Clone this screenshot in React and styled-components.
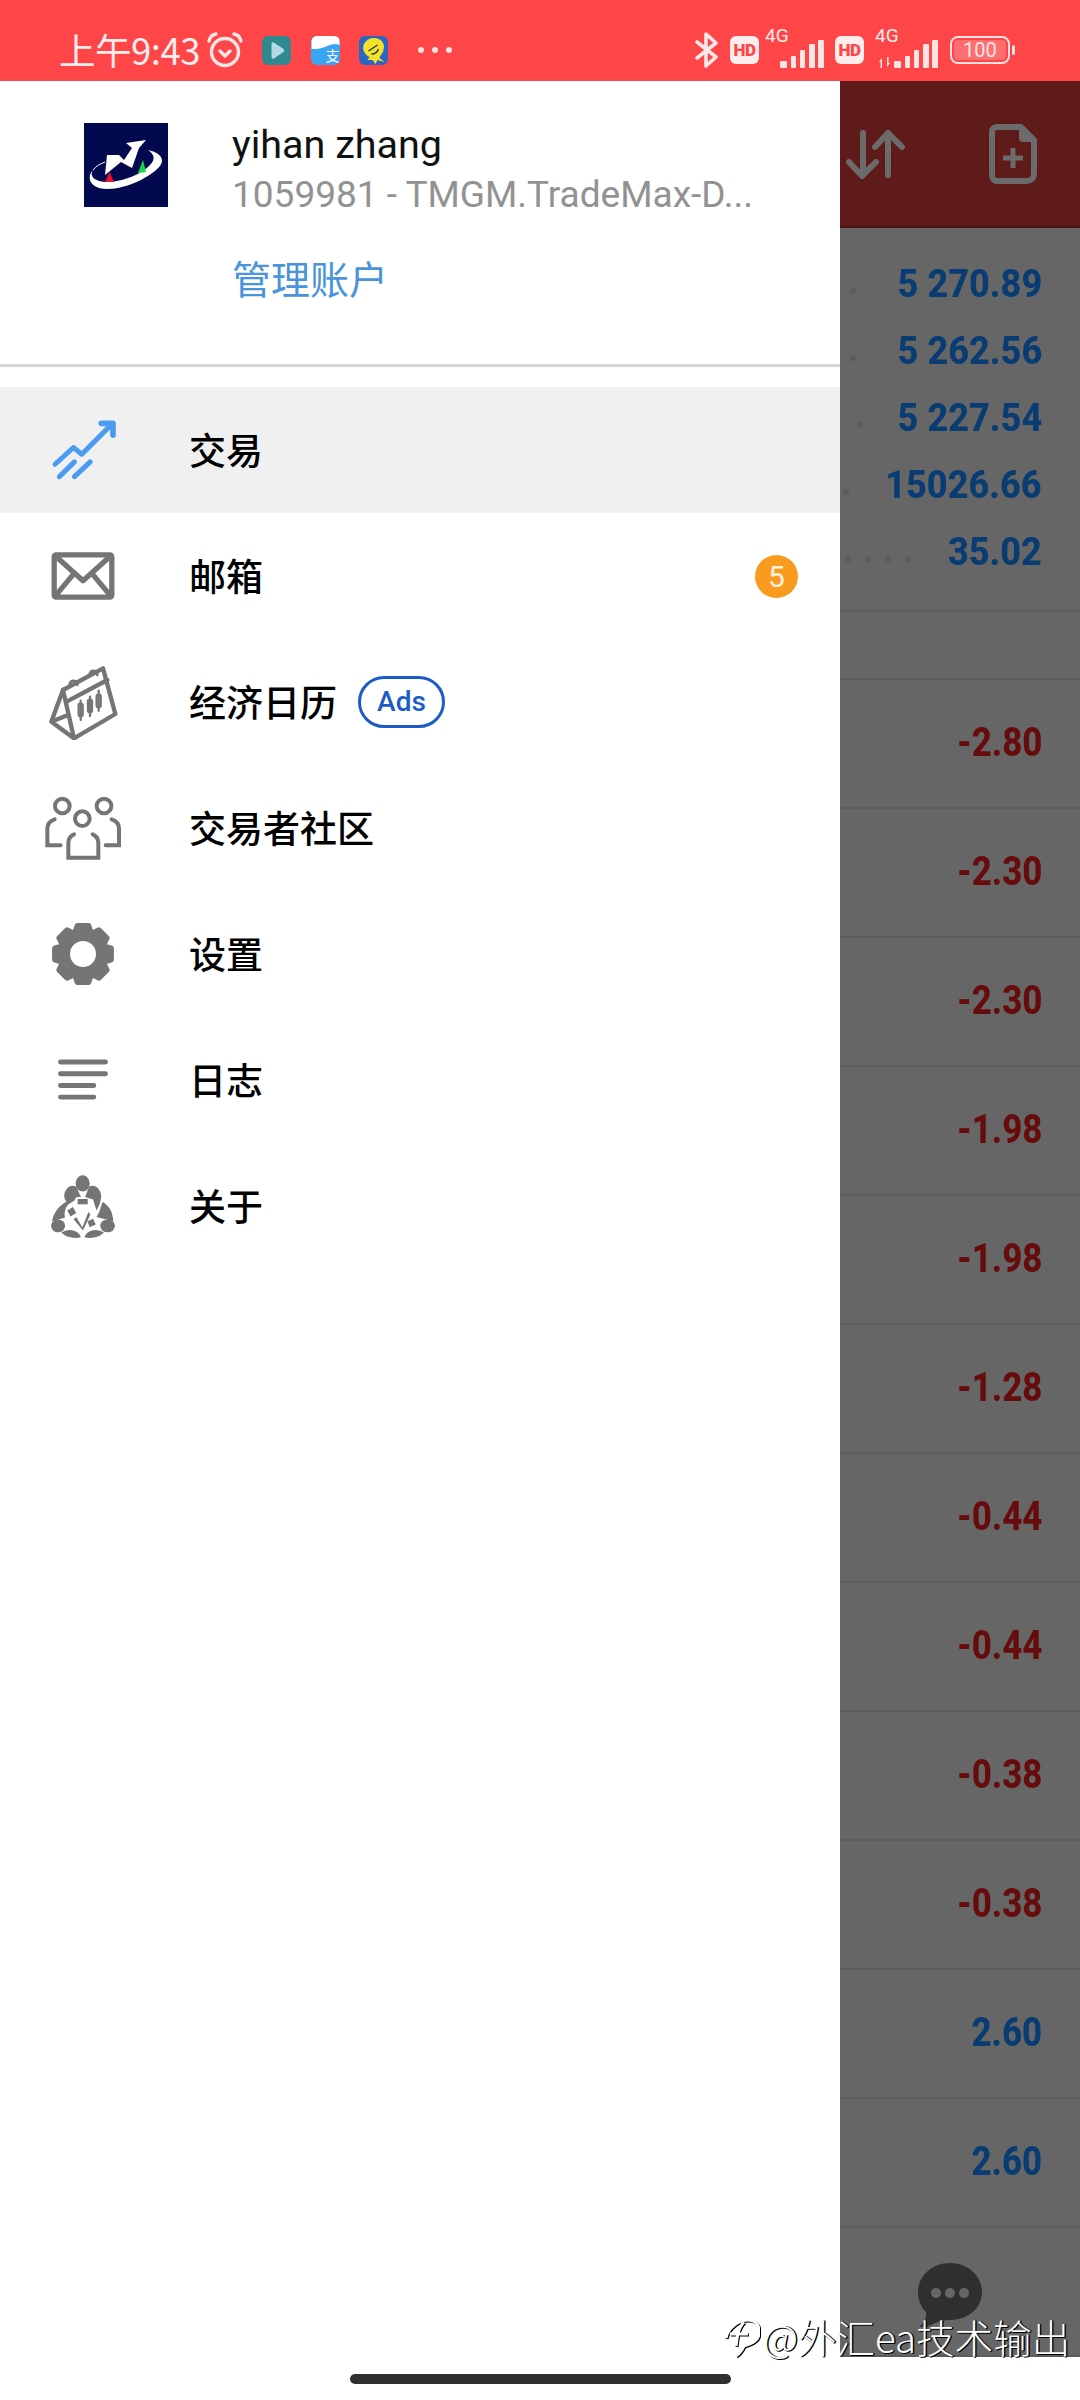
import React from "react";
import styled, { createGlobalStyle } from "styled-components";

const GlobalStyle = createGlobalStyle`
  html, body { margin: 0; padding: 0; background: #fff; }
  body { font-family: Roboto, "Noto Sans CJK SC", sans-serif; }
`;

const Page = styled.div`
  position: relative;
  width: 1080px;
  height: 2400px;
  display: flex;
  flex-direction: column;
  overflow: hidden;
  background: #fff;
`;

/* status bar */
const StatusBar = styled.div`
  height: 81px;
  flex: none;
  box-sizing: border-box;
  background: #fe4548;
  color: #ffecec;
  display: flex;
  align-items: center;
  justify-content: space-between;
  padding: 19px 70px 0 59px;
`;
const StatusGroup = styled.div`
  display: flex;
  align-items: center;
`;
const Clock = styled.span`
  font-family: "Noto Sans CJK SC", sans-serif;
  font-size: 36.5px;
  line-height: 40px;
  letter-spacing: -0.5px;
  margin-right: 6px;
  white-space: nowrap;
`;
const AppIcon = styled.span`
  width: 29px;
  height: 29px;
  border-radius: 6px;
  background: ${(p) => p.$bg};
  display: block;
  overflow: hidden;
  margin-left: ${(p) => p.$left || 0}px;
`;
const MoreDots = styled.span`
  display: flex;
  gap: 8px;
  margin-left: 30px;
  i {
    width: 6px;
    height: 6px;
    border-radius: 50%;
    background: #ffe0e0;
  }
`;
const HdTag = styled.span`
  width: 29px;
  height: 28px;
  border-radius: 6px;
  background: #ffecec;
  color: #fe4548;
  font-size: 17px;
  font-weight: 900;
  line-height: 28px;
  text-align: center;
  letter-spacing: -0.5px;
  margin-left: ${(p) => p.$left || 0}px;
`;
const NetBlock = styled.span`
  position: relative;
  width: ${(p) => p.$w}px;
  height: 38px;
  margin-left: ${(p) => p.$left}px;
  display: block;
`;
const NetLabel = styled.span`
  position: absolute;
  left: 0;
  top: -5px;
  font-size: 19px;
  line-height: 20px;
`;
const BarsSlot = styled.span`
  position: absolute;
  right: 0;
  top: 8px;
  svg { display: block; }
`;
const Battery = styled.span`
  width: 60px;
  height: 28px;
  box-sizing: border-box;
  border: 2px solid #ffe0e0;
  border-radius: 8px;
  margin-left: 12px;
  padding: 2px;
  display: flex;
  position: relative;
  &::after {
    content: "";
    position: absolute;
    right: -7px;
    top: 7px;
    width: 3px;
    height: 10px;
    border-radius: 2px;
    background: #ffe0e0;
  }
`;
const BatteryFill = styled.span`
  flex: 1;
  border-radius: 4px;
  background: rgba(255, 255, 255, 0.22);
  color: #ffe6e6;
  font-size: 20px;
  line-height: 20px;
  text-align: center;
`;

const Main = styled.div`
  flex: none;
  height: 2276px;
  display: flex;
`;

/* drawer */
const Drawer = styled.div`
  width: 840px;
  flex: none;
  background: #fff;
`;
const AccountBlock = styled.div`
  height: 286px;
  box-sizing: border-box;
  padding: 42px 0 0 84px;
  display: flex;
  border-bottom: 3px solid #d6d6d6;
`;
const AccountInfo = styled.div`
  margin-left: 64px;
  width: 540px;
`;
const AccountName = styled.div`
  font-size: 39.5px;
  line-height: 46px;
  color: #111;
  margin-top: -1px;
`;
const AccountId = styled.div`
  font-size: 37px;
  line-height: 48px;
  color: #929292;
  white-space: nowrap;
  margin-top: 3px;
`;
const ManageLink = styled.div`
  font-family: "Noto Sans CJK SC", sans-serif;
  font-size: 39px;
  line-height: 50px;
  color: #4a94dc;
  margin-top: 33px;
`;
const Menu = styled.div`
  padding-top: 20px;
`;
const MenuRow = styled.div`
  height: 126px;
  display: flex;
  align-items: center;
  background: ${(p) => (p.$active ? "#f0f0f0" : "transparent")};
`;
const MenuIcon = styled.span`
  width: 66px;
  margin: 0 73px 0 50px;
  flex: none;
  display: flex;
  justify-content: center;
  svg { display: block; flex: none; }
`;
const MenuLabel = styled.span`
  font-family: "Noto Sans CJK SC", sans-serif;
  font-size: 37px;
  font-weight: 500;
  color: #000;
  padding-bottom: 3px;
`;
const AdsPill = styled.span`
  margin-left: 21px;
  width: 87px;
  height: 52px;
  box-sizing: border-box;
  border: 3px solid #1c5cc8;
  border-radius: 26px;
  color: #1c5cc8;
  font-size: 28px;
  font-weight: 500;
  line-height: 46px;
  text-align: center;
`;
const CountBadge = styled.span`
  margin-left: auto;
  margin-right: 42px;
  width: 43px;
  height: 43px;
  border-radius: 50%;
  background: #f99b1f;
  color: #fff3e0;
  font-size: 30px;
  line-height: 43px;
  text-align: center;
`;

/* the dimmed page under the drawer */
const Behind = styled.div`
  position: relative;
  flex: 1;
  background: #666;
  overflow: hidden;
`;
const AppHeader = styled.div`
  height: 147px;
  background: #5f1a1a;
  border-bottom: 2px solid #4a1313;
  box-sizing: border-box;
  display: flex;
  align-items: center;
  padding: 0 0 0 6px;
  gap: 83px;
`;
const Summary = styled.div`
  height: 384px;
  box-sizing: border-box;
  padding-top: 22px;
  border-bottom: 2px solid #5d5d5d;
`;
const SummaryRow = styled.div`
  height: 67px;
  display: flex;
  align-items: center;
  padding-right: 38px;
`;
const Leader = styled.div`
  flex: 1;
  display: flex;
  gap: 14px;
  padding: 14px 0 0 ${(p) => p.$pad}px;
  i {
    width: 6px;
    height: 6px;
    border-radius: 50%;
    background: #5c5c5c;
  }
`;
const Amount = styled.span`
  display: inline-block;
  font-size: ${(p) => (p.$tall ? 41 : 38)}px;
  font-weight: 800;
  line-height: 46px;
  color: ${(p) => (p.$neg ? "#660c0c" : "#0a3c74")};
  transform: scaleX(${(p) => (p.$tall ? 0.85 : 0.95)});
  transform-origin: right center;
`;
const SectionGap = styled.div`
  height: 68px;
  box-sizing: border-box;
  border-bottom: 2px solid #5d5d5d;
`;
const TradeRow = styled.div`
  height: 129px;
  box-sizing: border-box;
  border-bottom: 2px solid #5d5d5d;
  display: flex;
  align-items: center;
  justify-content: flex-end;
  padding: 0 38px 4px 0;
`;
const ChatBubble = styled.svg`
  position: absolute;
  left: 78px;
  bottom: 30px;
`;

/* bottom gesture bar */
const NavBar = styled.div`
  flex: 1;
  background: #fff;
  display: flex;
  justify-content: center;
  padding-top: 17px;
`;
const HomeBar = styled.div`
  width: 381px;
  height: 10px;
  border-radius: 5px;
  background: #303030;
`;

/* video-site watermark */
const Watermark = styled.div`
  position: absolute;
  left: 724px;
  top: 2311px;
  display: flex;
  align-items: center;
  gap: 3px;
  color: #fff;
  font-family: "Noto Sans CJK SC", sans-serif;
  font-weight: 300;
  font-size: 38.5px;
  line-height: 50px;
  white-space: nowrap;
  text-shadow: 1px 1px 0 #000, 1.5px 0 0 #111;
  svg { filter: drop-shadow(1px 1px 0 #000); }
`;

const G = "#757575";

const Signal = ({ w = 44, arrows }) => (
  <svg width={w} height="30" viewBox={`0 0 ${w} 30`} fill="#ffe4e4">
    {arrows && <path d="M1 23L4 19V29H2.5V23ZM12 24L9 28V18H10.5V24Z" />}
    <g transform={`translate(${w - 44} 0)`}>
      <rect x="0" y="22" width="7" height="7" rx="1" />
      <rect x="11" y="17" width="5" height="12" rx="1" />
      <rect x="20" y="11" width="5" height="18" rx="1" />
      <rect x="29" y="5" width="6" height="24" rx="1" />
      <rect x="38" y="1" width="6" height="28" rx="1" />
    </g>
  </svg>
);

const AlarmIcon = () => (
  <svg width="38" height="38" viewBox="0 0 38 38" fill="none" stroke="#ffe4e4" strokeWidth="3.4" strokeLinecap="round" strokeLinejoin="round">
    <circle cx="19" cy="21" r="13.5" />
    <path d="M3 10C4 6 7 3.5 10 3M35 10C34 6 31 3.5 28 3" />
    <path d="M14 20L19 25L24 20" />
  </svg>
);

const BluetoothIcon = () => (
  <svg width="24" height="36" viewBox="0 0 24 36" fill="none" stroke="#ffe8e8" strokeWidth="3.6" strokeLinejoin="round" strokeLinecap="round">
    <path d="M2 10L21 25L11 34V2L21 11L2 26" />
  </svg>
);

const TradeIcon = () => (
  <svg width="67" height="62" viewBox="90 90 200 185" fill="none" stroke="#4b9cf0" strokeWidth="15" strokeLinecap="round" strokeLinejoin="round">
    <path d="M105 225L160 175L185 195L268 112" />
    <path d="M243 103H278V138" strokeWidth="17" />
    <path d="M118 262L163 218M163 262L210 218" />
  </svg>
);

const MailIcon = () => (
  <svg width="64" height="48" viewBox="0 0 66 50" fill="none" stroke={G} strokeWidth="5.5" strokeLinejoin="round">
    <rect x="3" y="3" width="60" height="44" rx="2" />
    <path d="M4 4L33 30L62 4M4 46L24 22M62 46L42 22" />
  </svg>
);

const CalendarIcon = () => (
  <svg width="70" height="76" viewBox="90 72 210 228" fill="none" stroke={G} strokeWidth="13" strokeLinejoin="round" strokeLinecap="round">
    <path d="M135 150L255 85L292 222L168 295Z" />
    <path d="M135 150L100 245L168 295M100 245L150 225M146 185L268 120" />
    <path d="M155 135C155 118 178 118 178 135M215 105C215 88 238 88 238 105" strokeWidth="8" />
    <g strokeWidth="7">
      <rect x="182" y="192" width="12" height="36" rx="3" />
      <rect x="236" y="165" width="12" height="36" rx="3" />
      <rect x="210" y="180" width="12" height="36" rx="3" fill={G} />
      <path d="M188 182V240M216 170V228M242 152V212" />
    </g>
  </svg>
);

const CommunityIcon = () => (
  <svg width="76" height="64" viewBox="78 80 228 192" fill="none" stroke={G} strokeWidth="12">
    <circle cx="130" cy="110" r="22" />
    <circle cx="255" cy="110" r="22" />
    <circle cx="190" cy="148" r="22" />
    <path d="M107 150C92 155 85 165 85 178V228H125M278 150C293 155 300 165 300 178V228H260" strokeLinecap="round" />
    <path d="M165 195C153 200 148 210 148 222V265H238V222C238 210 233 200 221 195" strokeLinecap="round" />
  </svg>
);

// 8 rounded teeth around a hole
const gearPath = () => {
  const pts = [];
  for (let i = 0; i < 8; i++) {
    const a = (i * Math.PI) / 4 - Math.PI / 2;
    [[-0.36, 23], [-0.2, 29], [0.2, 29], [0.36, 23]].forEach(([d, r]) => {
      pts.push(`${(32 + r * Math.cos(a + d)).toFixed(1)} ${(32 + r * Math.sin(a + d)).toFixed(1)}`);
    });
  }
  return `M${pts.join("L")}Z`;
};

const GearIcon = () => (
  <svg width="64" height="64" viewBox="0 0 64 64">
    <path d={gearPath()} fill={G} stroke={G} strokeWidth="5" strokeLinejoin="round" />
    <circle cx="32" cy="32" r="13" fill="#fff" />
  </svg>
);

const LogIcon = () => (
  <svg width="54" height="46" viewBox="0 0 60 50" fill="none" stroke={G} strokeWidth="5.5" strokeLinecap="round">
    <path d="M5 5H55M5 18H55M5 31H42M5 44H42" />
  </svg>
);

const AboutIcon = () => (
  <svg width="66" height="64" viewBox="95 432 194 190">
    <g fill={G}>
      <ellipse cx="191" cy="460" rx="21" ry="24" />
      <path d="M136 495C140 470 160 462 172 470L186 500H174L160 515L150 520C140 515 136 505 136 495Z" />
      <path d="M246 495C242 470 222 462 210 470L198 500L222 508L232 540C242 525 246 510 246 495Z" />
      <path d="M100 572C105 540 130 515 168 503V510C145 520 135 535 138 562Z" />
      <path d="M282 572C280 540 268 525 250 515L240 545L232 560Z" />
      <ellipse cx="118" cy="586" rx="21" ry="19" />
      <ellipse cx="265" cy="586" rx="22" ry="19" />
      <path d="M128 606C150 590 180 600 186 620C165 625 140 620 128 606Z" />
      <path d="M254 606C232 590 202 600 196 620C217 625 242 620 254 606Z" />
      <rect x="176" y="506" width="30" height="16" />
      <path d="M145 540L162 530L172 548L155 558ZM205 572L222 565L230 582L212 590Z" />
      <path d="M172 560L190 590L208 545L214 552L192 600L164 566Z" />
    </g>
  </svg>
);

const BrandLogo = () => (
  <svg width="84" height="84" viewBox="0 0 84 84">
    <rect width="84" height="84" fill="#02094e" />
    <path d="M9 47C3 53 5 62 15 65C35 70 66 55 76 43C82 35 74 29 64 27C70 31 72 36 66 42C56 53 30 62 15 58C8 56 6 51 9 47Z" fill="#fff" />
    <path d="M9 47C12 43 16 41 21 39" stroke="#fff" strokeWidth="1" fill="none" />
    <path d="M23 32L21 52L37 39L48 45L55 25L62 17L42 20L48 25L40 37L35 32L26 32Z" fill="#fff" />
    <path d="M25.5 49L21 59L30 59Z" fill="#e8102a" />
    <path d="M59 37L54 50L62 49Z" fill="#19d648" />
  </svg>
);

const SortIcon = () => (
  <svg width="60" height="50" viewBox="0 0 60 50" fill="none" stroke="#6b6b6b" strokeWidth="6" strokeLinecap="round" strokeLinejoin="round">
    <path d="M17 4V46M3 33L16 47L30 33" />
    <path d="M42 46V5M29 18L42 4L56 18" />
  </svg>
);

const NewDocIcon = () => (
  <svg width="48" height="60" viewBox="0 0 48 60" fill="none">
    <path d="M8 3H32L45 16V50C45 54 42 57 38 57H8C5 57 3 54 3 50V8C3 5 5 3 8 3Z" stroke="#6b6b6b" strokeWidth="6" strokeLinejoin="round" />
    <path d="M30 3L45 18H34C31 18 30 16 30 14Z" fill="#6b6b6b" />
    <path d="M24 24V44M14 34H34" stroke="#6b6b6b" strokeWidth="5" />
  </svg>
);

const menu = [
  { label: "交易", Icon: TradeIcon, active: true },
  { label: "邮箱", Icon: MailIcon, badge: "5" },
  { label: "经济日历", Icon: CalendarIcon, ads: true },
  { label: "交易者社区", Icon: CommunityIcon },
  { label: "设置", Icon: GearIcon },
  { label: "日志", Icon: LogIcon },
  { label: "关于", Icon: AboutIcon },
];

const summary = [
  { value: "5 270.89", dots: 1, pad: 10 },
  { value: "5 262.56", dots: 1, pad: 10 },
  { value: "5 227.54", dots: 1, pad: 17 },
  { value: "15026.66", dots: 1, pad: 3 },
  { value: "35.02", dots: 4, pad: 5 },
];

const trades = ["-2.80", "-2.30", "-2.30", "-1.98", "-1.98", "-1.28", "-0.44", "-0.44", "-0.38", "-0.38", "2.60", "2.60", ""];

export default function App() {
  return (
    <Page>
      <GlobalStyle />
      <StatusBar>
        <StatusGroup>
          <Clock>上午9:43</Clock>
          <AlarmIcon />
          <AppIcon $bg="#2f8a8f" $left={18}>
            <svg width="29" height="29" viewBox="0 0 28 29"><path d="M9 8C9 6 11 6 12 7L21 13C22 14 22 15 21 16L12 22C11 23 9 23 9 21Z" fill="#b7d9e6" /></svg>
          </AppIcon>
          <AppIcon $bg="#38a5f5" $left={20}>
            <svg width="29" height="29" viewBox="0 0 28 29">
              <path d="M0 0H28V9C20 5 14 14 0 13Z" fill="#fff" />
              <text x="14" y="25" fontSize="14" fill="#fff" fontFamily="Noto Sans CJK SC">支</text>
            </svg>
          </AppIcon>
          <AppIcon $bg="#2b66c4" $left={19}>
            <svg width="29" height="29" viewBox="0 0 28 29">
              <path d="M14 2C22 2 26 8 24 14C23 18 20 20 20 22L25 26L18 24L16 28L13 24L8 24L10 21C4 18 2 12 5 7C7 4 10 2 14 2Z" fill="#f2e22a" />
              <path d="M9 15L18 9M12 18C15 18 18 16 19 13" stroke="#333" strokeWidth="1.4" fill="none" />
            </svg>
          </AppIcon>
          <MoreDots><i /><i /><i /></MoreDots>
        </StatusGroup>
        <StatusGroup>
          <BluetoothIcon />
          <HdTag $left={11}>HD</HdTag>
          <NetBlock $w={59} $left={6}>
            <NetLabel>4G</NetLabel>
            <BarsSlot><Signal /></BarsSlot>
          </NetBlock>
          <HdTag $left={11}>HD</HdTag>
          <NetBlock $w={63} $left={11}>
            <NetLabel>4G</NetLabel>
            <BarsSlot><Signal w={60} arrows /></BarsSlot>
          </NetBlock>
          <Battery><BatteryFill>100</BatteryFill></Battery>
        </StatusGroup>
      </StatusBar>

      <Main>
        <Drawer>
          <AccountBlock>
            <BrandLogo />
            <AccountInfo>
              <AccountName>yihan zhang</AccountName>
              <AccountId>1059981 - TMGM.TradeMax-D...</AccountId>
              <ManageLink>管理账户</ManageLink>
            </AccountInfo>
          </AccountBlock>
          <Menu>
            {menu.map(({ label, Icon, active, badge, ads }) => (
              <MenuRow key={label} $active={active}>
                <MenuIcon><Icon /></MenuIcon>
                <MenuLabel>{label}</MenuLabel>
                {ads && <AdsPill>Ads</AdsPill>}
                {badge && <CountBadge>{badge}</CountBadge>}
              </MenuRow>
            ))}
          </Menu>
        </Drawer>
        <Behind>
          <AppHeader>
            <SortIcon />
            <NewDocIcon />
          </AppHeader>
          <Summary>
            {summary.map((row) => (
              <SummaryRow key={row.value}>
                <Leader $pad={row.pad}>
                  {Array.from({ length: row.dots }).map((_, i) => <i key={i} />)}
                </Leader>
                <Amount>{row.value}</Amount>
              </SummaryRow>
            ))}
          </Summary>
          <SectionGap />
          {trades.map((value, i) => (
            <TradeRow key={i}>
              {value && <Amount $tall $neg={value.startsWith("-")}>{value}</Amount>}
            </TradeRow>
          ))}
          <ChatBubble width="64" height="64" viewBox="0 0 64 64">
            <path d="M32 0C50 0 64 13 64 29C64 45 50 57 32 57C27 57 22 58 17 60C12 63 6 64 1 64C6 60 9 54 8 49C3 44 0 37 0 29C0 13 14 0 32 0Z" fill="#2f2f2f" />
            <circle cx="18" cy="30" r="5" fill="#666" />
            <circle cx="32" cy="30" r="5" fill="#666" />
            <circle cx="46" cy="30" r="5" fill="#666" />
          </ChatBubble>
        </Behind>
      </Main>

      <NavBar><HomeBar /></NavBar>

      <Watermark>
        <svg width="36" height="44" viewBox="0 0 36 44" fill="none" stroke="#fff" strokeWidth="3">
          <path d="M2 24C4 14 14 6 24 6C32 6 36 12 35 20C34 28 26 30 20 32C18 36 15 40 12 42" />
          <path d="M20 8C14 14 13 24 12 32M6 20H24" />
        </svg>
        <span>@外汇ea技术输出</span>
      </Watermark>
    </Page>
  );
}
